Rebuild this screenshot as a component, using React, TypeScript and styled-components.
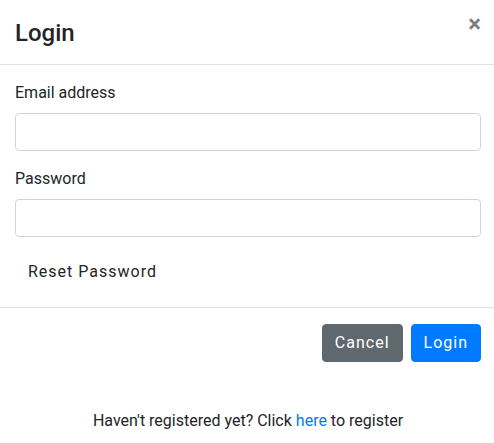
import React from "react";
import styled, { createGlobalStyle } from "styled-components";

const Global = createGlobalStyle`
  html, body { margin: 0; padding: 0; background: #fff; overflow: hidden; }
  body { font-family: Roboto, "Liberation Sans", sans-serif; color: #212529; font-size: 16px; line-height: 1.5; }
  * { box-sizing: border-box; }
`;

const Modal = styled.div`
  width: 498px;
  margin: 0 0 0 -1px;
  padding-top: 2px;
  background: #fff;
  display: flex;
  flex-direction: column;
`;

const Header = styled.div`
  display: flex;
  align-items: flex-start;
  justify-content: space-between;
  padding: 16px;
  border-bottom: 1px solid #dee2e6;
`;

const Title = styled.h4`
  margin: 0;
  font-size: 24px;
  font-weight: 500;
  line-height: 30px;
  color: #212529;
`;

const Close = styled.button`
  margin: -16px -16px -16px auto;
  padding: 10px 16px 16px;
  background: transparent;
  border: 0;
  font-family: Roboto, "Liberation Sans", sans-serif;
  font-size: 24px;
  font-weight: 700;
  line-height: 1;
  color: #000;
  opacity: 0.5;
  text-shadow: 0 1px 0 #fff;
  cursor: pointer;
`;

const Body = styled.div`
  padding: 16px;
`;

const Group = styled.div`
  margin-bottom: 16px;
`;

const Label = styled.label`
  display: block;
  margin-bottom: 8px;
  font-size: 16px;
  line-height: 24px;
`;

const Input = styled.input`
  display: block;
  width: 100%;
  height: 38px;
  padding: 6px 12px;
  font-size: 16px;
  font-family: inherit;
  border: 1px solid #ced4da;
  border-radius: 4px;
  background: #fff;
  outline: none;
`;

type Variant = "plain" | "secondary" | "primary";

const colors: Record<Variant, { bg: string; fg: string; border: string }> = {
  plain: { bg: "transparent", fg: "#212529", border: "transparent" },
  secondary: { bg: "#5f686f", fg: "#fff", border: "#5f686f" },
  primary: { bg: "#007bff", fg: "#fff", border: "#007bff" },
};

const Button = styled.button<{ $variant: Variant }>`
  display: inline-block;
  height: 38px;
  padding: 6px 12px;
  font-family: Roboto, "Liberation Sans", sans-serif;
  font-size: 16px;
  font-weight: 400;
  line-height: 24px;
  letter-spacing: 1px;
  border-radius: 4px;
  border: 1px solid ${(p) => colors[p.$variant].border};
  background: ${(p) => colors[p.$variant].bg};
  color: ${(p) => colors[p.$variant].fg};
  cursor: pointer;
`;

const Footer = styled.div`
  display: flex;
  justify-content: flex-end;
  align-items: center;
  gap: 8px;
  padding: 16px;
  border-top: 1px solid #dee2e6;
`;

const Note = styled.p`
  margin: 31px 0 0;
  text-align: center;
  font-size: 16px;
  line-height: 24px;
  color: #212529;
`;

const Link = styled.a`
  color: #007bff;
  text-decoration: none;
`;

export default function App() {
  return (
    <>
      <Global />
      <Modal>
        <Header>
          <Title>Login</Title>
          <Close aria-label="Close">×</Close>
        </Header>
        <Body>
          <Group>
            <Label htmlFor="email">Email address</Label>
            <Input id="email" type="email" />
          </Group>
          <Group>
            <Label htmlFor="password">Password</Label>
            <Input id="password" type="password" />
          </Group>
          <Button $variant="plain">Reset Password</Button>
        </Body>
        <Footer>
          <Button $variant="secondary">Cancel</Button>
          <Button $variant="primary">Login</Button>
        </Footer>
        <Note>
          Haven't registered yet? Click <Link href="#">here</Link> to register
        </Note>
      </Modal>
    </>
  );
}
